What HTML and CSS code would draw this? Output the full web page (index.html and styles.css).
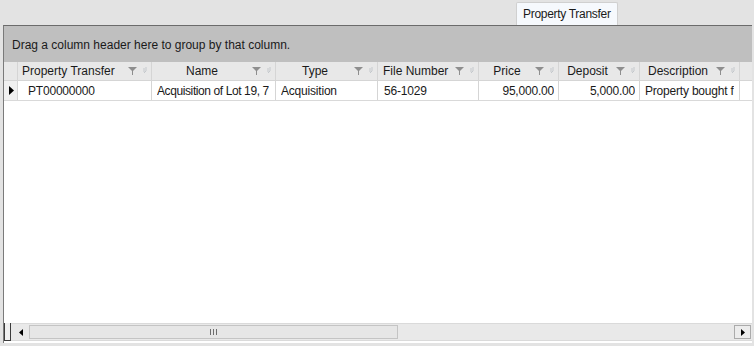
FILE: index.html
```html
<!DOCTYPE html>
<html lang="en">
<head>
    <meta charset="UTF-8">
    <title>Property Transfer</title>
    <link rel="stylesheet" href="styles.css">
</head>
<body>

    <div class="tab-strip">
        <div class="tab">Property Transfer</div>
    </div>

    <div class="grid-panel">
        <div class="group-box">Drag a column header here to group by that column.</div>

        <div class="grid">
            <div class="row header-row">
                <div class="selector"></div>
                <div class="cell head c-pt"><span>Property Transfer</span><i class="icons"><svg width="9" height="8" viewBox="0 0 9 8"><path d="M0 0H9L5 4V8H4V4Z" fill="#8e8e8e"/></svg><svg width="4" height="8" viewBox="0 0 4 8"><path d="M3 0V4L1 6M1 1V5" stroke="#c4c8cc" fill="none"/></svg></i></div>
                <div class="cell head c-name"><span>Name</span><i class="icons"><svg width="9" height="8" viewBox="0 0 9 8"><path d="M0 0H9L5 4V8H4V4Z" fill="#8e8e8e"/></svg><svg width="4" height="8" viewBox="0 0 4 8"><path d="M3 0V4L1 6M1 1V5" stroke="#c4c8cc" fill="none"/></svg></i></div>
                <div class="cell head c-type"><span>Type</span><i class="icons"><svg width="9" height="8" viewBox="0 0 9 8"><path d="M0 0H9L5 4V8H4V4Z" fill="#8e8e8e"/></svg><svg width="4" height="8" viewBox="0 0 4 8"><path d="M3 0V4L1 6M1 1V5" stroke="#c4c8cc" fill="none"/></svg></i></div>
                <div class="cell head c-file"><span>File Number</span><i class="icons"><svg width="9" height="8" viewBox="0 0 9 8"><path d="M0 0H9L5 4V8H4V4Z" fill="#8e8e8e"/></svg><svg width="4" height="8" viewBox="0 0 4 8"><path d="M3 0V4L1 6M1 1V5" stroke="#c4c8cc" fill="none"/></svg></i></div>
                <div class="cell head c-price"><span>Price</span><i class="icons"><svg width="9" height="8" viewBox="0 0 9 8"><path d="M0 0H9L5 4V8H4V4Z" fill="#8e8e8e"/></svg><svg width="4" height="8" viewBox="0 0 4 8"><path d="M3 0V4L1 6M1 1V5" stroke="#c4c8cc" fill="none"/></svg></i></div>
                <div class="cell head c-deposit"><span>Deposit</span><i class="icons"><svg width="9" height="8" viewBox="0 0 9 8"><path d="M0 0H9L5 4V8H4V4Z" fill="#8e8e8e"/></svg><svg width="4" height="8" viewBox="0 0 4 8"><path d="M3 0V4L1 6M1 1V5" stroke="#c4c8cc" fill="none"/></svg></i></div>
                <div class="cell head c-desc"><span>Description</span><i class="icons"><svg width="9" height="8" viewBox="0 0 9 8"><path d="M0 0H9L5 4V8H4V4Z" fill="#8e8e8e"/></svg><svg width="4" height="8" viewBox="0 0 4 8"><path d="M3 0V4L1 6M1 1V5" stroke="#c4c8cc" fill="none"/></svg></i></div>
                <div class="cell head c-rest"></div>
            </div>

            <div class="row data-row">
                <div class="selector"><svg width="5" height="9" viewBox="0 0 5 9"><path d="M0 0L5 4.5L0 9Z" fill="#000"/></svg></div>
                <div class="cell c-pt pad-pt"><span class="txt">PT00000000</span></div>
                <div class="cell c-name"><span class="txt">Acquisition of Lot 19, 7</span></div>
                <div class="cell c-type"><span class="txt">Acquisition</span></div>
                <div class="cell c-file"><span class="txt">56-1029</span></div>
                <div class="cell c-price num"><span class="txt">95,000.00</span></div>
                <div class="cell c-deposit num"><span class="txt">5,000.00</span></div>
                <div class="cell c-desc"><span class="txt">Property bought f</span></div>
                <div class="cell c-rest"></div>
            </div>

            <div class="grid-body"></div>

            <div class="scroll-row">
                <div class="corner"></div>
                <div class="hscroll">
                    <div class="arrow"><svg width="4" height="7" viewBox="0 0 4 7"><path d="M4 0L0 3.5L4 7Z" fill="#000"/></svg></div>
                    <div class="track">
                        <div class="thumb"><span class="grip"></span></div>
                    </div>
                    <div class="arrow arrow-right"><svg width="4" height="7" viewBox="0 0 4 7"><path d="M0 0L4 3.5L0 7Z" fill="#000"/></svg></div>
                </div>
            </div>
        </div>
    </div>

</body>
</html>
```

FILE: styles.css
```css
* {
    margin: 0;
    padding: 0;
    box-sizing: border-box;
}

body {
    font-family: 'Liberation Sans', Arial, sans-serif;
    font-size: 12px;
    color: #1a1a1a;
    background-color: #e3e3e3;
    width: 754px;
    height: 346px;
    overflow: hidden;
}

/* tab strip */
.tab-strip {
    height: 25px;
    display: flex;
    padding-left: 516px;
    padding-top: 2px;
}

.tab {
    width: 102px;
    height: 23px;
    background-color: #f6f9fd;
    border: 1px solid #d0d0d0;
    border-bottom: none;
    border-radius: 2px 2px 0 0;
    padding: 4px 0 0 6px;
    letter-spacing: -0.3px;
    white-space: nowrap;
    color: #1a1a1a;
}

/* grid panel */
.grid-panel {
    margin-left: 3px;
    width: 749px;
    height: 318px;
    border-top: 1px solid #6b6b6b;
    border-left: 1px solid #7a7a7a;
    background-color: #fff;
    display: flex;
    flex-direction: column;
}

.group-box {
    height: 36px;
    background-color: #bfbfbf;
    padding: 12px 0 0 8px;
    color: #1a1a1a;
}

.grid {
    flex: 1;
    display: flex;
    flex-direction: column;
    background-color: #fff;
}

.row {
    display: flex;
}

.header-row {
    height: 19px;
    background-color: #e8e8e8;
    border-bottom: 1px solid #d5d5d5;
}

.data-row {
    height: 20px;
    background-color: #fff;
    border-bottom: 1px solid #d9d9d9;
}

.selector {
    width: 14px;
    flex-shrink: 0;
    border-right: 1px solid #d5d5d5;
    display: flex;
    align-items: center;
    justify-content: center;
}

.header-row .selector {
    background-color: #e8e8e8;
}

.data-row .selector {
    background-color: #f0f0f0;
    padding-left: 2px;
}

.cell {
    flex-shrink: 0;
    border-right: 1px solid #d5d5d5;
    display: flex;
    align-items: center;
    padding: 0 3px 0 5px;
    white-space: nowrap;
    overflow: hidden;
}

.txt {
    overflow: hidden;
    white-space: nowrap;
    letter-spacing: -0.2px;
}

.c-name .txt {
    letter-spacing: -0.4px;
}

.head {
    justify-content: center;
    padding: 0 4px 0 4px;
}

.head span {
    flex: 1;
    text-align: center;
}

.c-pt span {
    text-align: left;
}

.c-file span {
    text-align: left;
    padding-left: 1px;
}

.icons {
    display: flex;
    align-items: center;
    gap: 6px;
    margin-left: 4px;
}

.c-pt { width: 134px; }
.c-name { width: 124px; }
.c-type { width: 102px; }
.c-file { width: 101px; }
.c-price { width: 80px; }
.c-deposit { width: 81px; }
.c-desc { width: 100px; }
.c-rest { flex: 1; border-right: none; }

.pad-pt {
    padding-left: 10px;
}

.num {
    justify-content: flex-end;
    padding-right: 4px;
}

.grid-body {
    flex: 1;
}

/* bottom scroll bar */
.scroll-row {
    height: 18px;
    display: flex;
    margin-bottom: 2px;
}

.corner {
    width: 7px;
    border: 1px solid #3c3c3c;
    border-top: none;
    background-color: #f0f0f0;
}

.hscroll {
    flex: 1;
    display: flex;
    align-items: stretch;
    background-color: #e9e9e9;
    border-top: 1px solid #dadada;
    border-bottom: 1px solid #dadada;
    padding: 0 1px;
}

.arrow {
    width: 17px;
    display: flex;
    align-items: center;
    justify-content: center;
}

.arrow-right {
    border: 1px solid #ababab;
    background-color: #ececec;
    margin: 1px 0;
}

.track {
    flex: 1;
    display: flex;
    padding: 1px 0;
}

.thumb {
    width: 369px;
    border: 1px solid #c4c4c4;
    background-color: #e6e6e6;
    display: flex;
    align-items: center;
    justify-content: center;
}

.grip {
    width: 7px;
    height: 6px;
    background: repeating-linear-gradient(to right, #6e6e6e 0 1px, transparent 1px 3px);
}
```
